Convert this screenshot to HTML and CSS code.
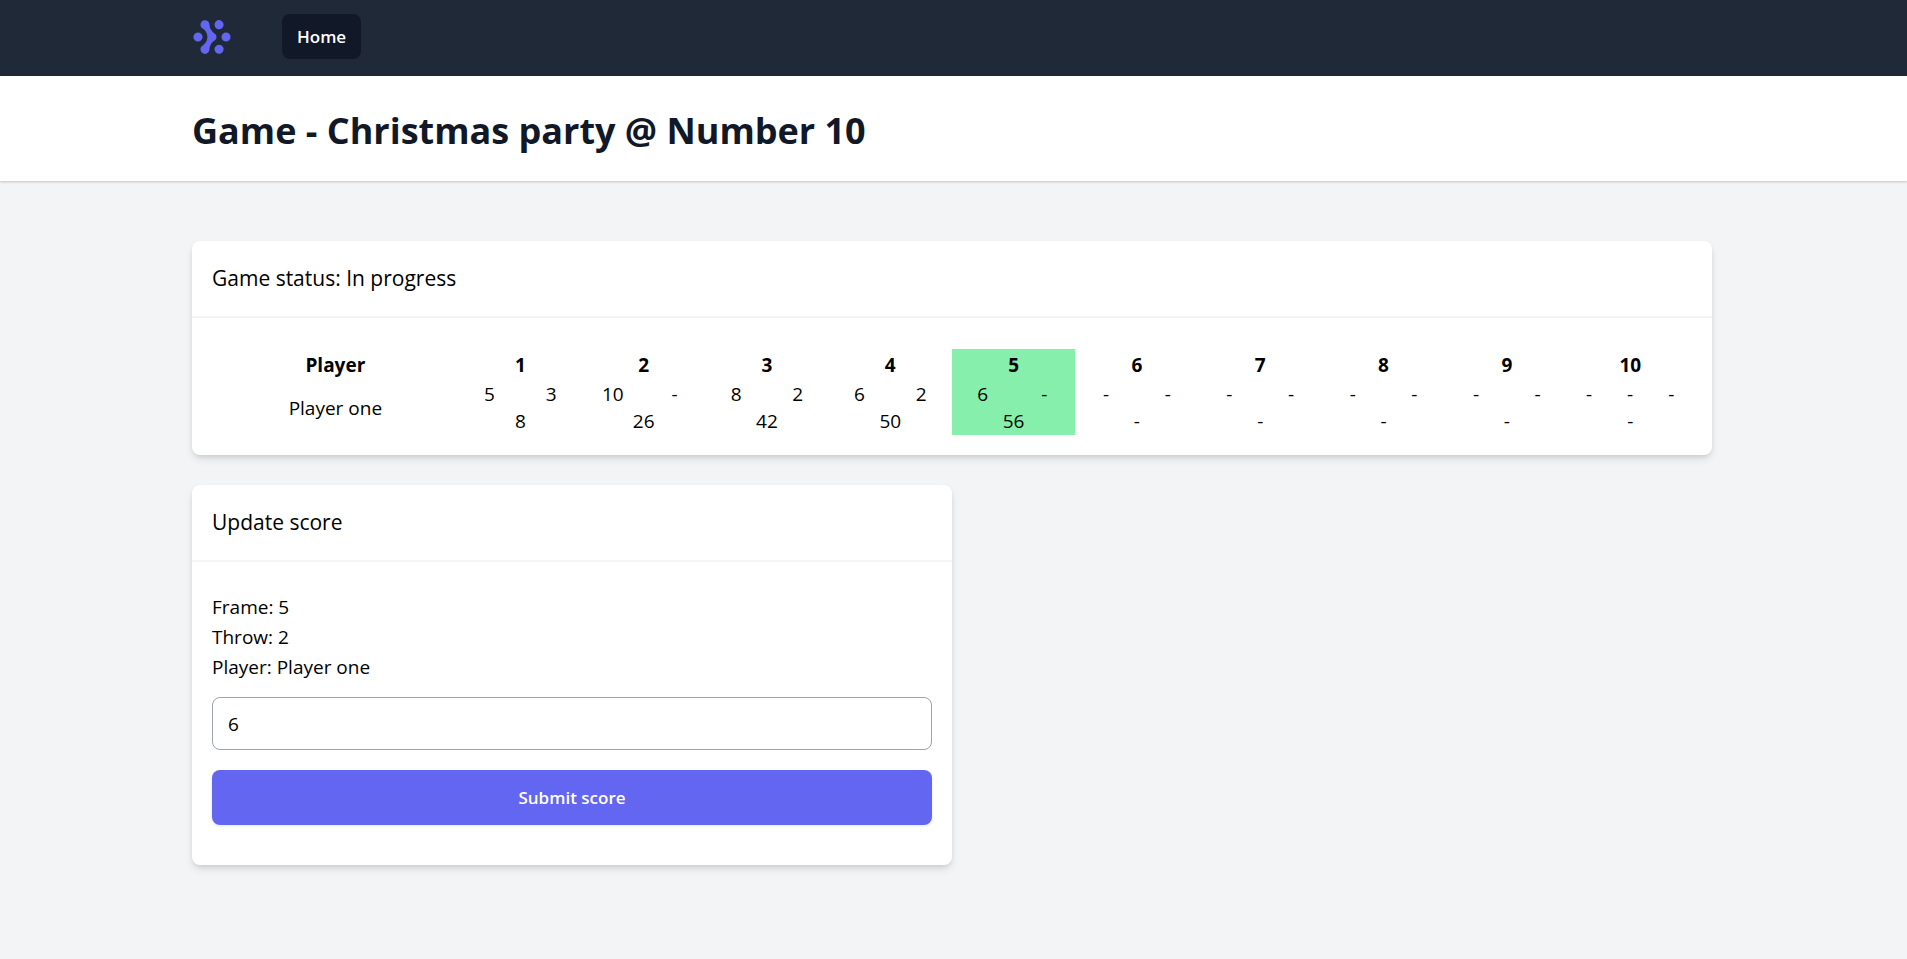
FILE: index.html
```html
<!DOCTYPE html>
<html lang="en">
<head>
<meta charset="utf-8">
<meta name="viewport" content="width=device-width, initial-scale=1">
<title>Game - Christmas party @ Number 10</title>
<link rel="stylesheet" href="styles.css">
</head>
<body>
<nav class="nav">
  <div class="container nav-inner">
    <svg class="logo" viewBox="0 0 35 32" role="img" aria-label="Logo"><path fill="#6366f1" d="M15.258 26.865a4.043 4.043 0 01-1.133 2.917A4.006 4.006 0 0111.253 31a3.992 3.992 0 01-2.872-1.218 4.028 4.028 0 01-1.133-2.917c.009-.698.2-1.382.557-1.981.356-.6.863-1.094 1.47-1.433-.024.109.09-.055 0 0l1.86-1.652a8.495 8.495 0 002.304-5.793c0-2.926-1.711-5.901-4.17-7.457.094.055-.036-.094 0 0A3.952 3.952 0 017.8 7.116a3.975 3.975 0 01-.557-1.98 4.042 4.042 0 011.133-2.918A4.006 4.006 0 0111.247 1a3.99 3.99 0 012.872 1.218 4.025 4.025 0 011.133 2.917 8.521 8.521 0 002.347 5.832l.817.8c.326.285.668.551 1.024.798.621.33 1.142.826 1.504 1.431a3.902 3.902 0 01-1.504 5.442c.033-.067-.063.036 0 0a8.968 8.968 0 00-3.024 3.183 9.016 9.016 0 00-1.158 4.244zM19.741 5.123c0 .796.235 1.575.676 2.237a4.01 4.01 0 001.798 1.482 3.99 3.99 0 004.366-.873 4.042 4.042 0 00.869-4.386 4.02 4.02 0 00-1.476-1.806 3.994 3.994 0 00-5.058.501 4.038 4.038 0 00-1.175 2.845zM23.748 22.84c-.792 0-1.567.236-2.226.678a4.021 4.021 0 00-1.476 1.806 4.042 4.042 0 00.869 4.387 3.99 3.99 0 004.366.873A4.01 4.01 0 0027.08 29.1a4.039 4.039 0 00-.5-5.082 4 4 0 00-2.832-1.18zM34 15.994c0-.796-.235-1.574-.675-2.236a4.01 4.01 0 00-1.798-1.483 3.99 3.99 0 00-4.367.873 4.042 4.042 0 00-.869 4.387 4.02 4.02 0 001.476 1.806 3.993 3.993 0 002.226.678 4.003 4.003 0 002.832-1.18A4.04 4.04 0 0034 15.993zM5.007 11.969c-.793 0-1.567.236-2.226.678a4.021 4.021 0 00-1.476 1.807 4.042 4.042 0 00.869 4.386 4.001 4.001 0 004.366.873 4.011 4.011 0 001.798-1.483 4.038 4.038 0 00-.5-5.08 4.004 4.004 0 00-2.831-1.181z"/></svg>
    <a class="nav-link" href="#" aria-current="page">Home</a>
  </div>
</nav>
<header class="page-header">
  <div class="container">
    <h1 class="page-title">Game - Christmas party @ Number 10</h1>
  </div>
</header>
<main class="container main">
  <section class="card">
    <h2 class="card-title">Game status: In progress</h2>
    <div class="card-table">
      <table class="scores">
        <colgroup>
          <col class="col-player">
          <col class="col-half" span="18">
          <col class="col-third" span="3">
        </colgroup>
        <thead>
          <tr>
            <th scope="col">Player</th>
            <th scope="col" colspan="2">1</th>
            <th scope="col" colspan="2">2</th>
            <th scope="col" colspan="2">3</th>
            <th scope="col" colspan="2">4</th>
            <th scope="col" colspan="2" class="current">5</th>
            <th scope="col" colspan="2">6</th>
            <th scope="col" colspan="2">7</th>
            <th scope="col" colspan="2">8</th>
            <th scope="col" colspan="2">9</th>
            <th scope="col" colspan="3">10</th>
          </tr>
        </thead>
        <tbody>
          <tr>
            <td rowspan="2">Player one</td>
            <td>5</td><td>3</td>
            <td>10</td><td>-</td>
            <td>8</td><td>2</td>
            <td>6</td><td>2</td>
            <td class="current">6</td><td class="current">-</td>
            <td>-</td><td>-</td>
            <td>-</td><td>-</td>
            <td>-</td><td>-</td>
            <td>-</td><td>-</td>
            <td>-</td><td>-</td><td>-</td>
          </tr>
          <tr>
            <td colspan="2">8</td>
            <td colspan="2">26</td>
            <td colspan="2">42</td>
            <td colspan="2">50</td>
            <td colspan="2" class="current">56</td>
            <td colspan="2">-</td>
            <td colspan="2">-</td>
            <td colspan="2">-</td>
            <td colspan="2">-</td>
            <td colspan="3">-</td>
          </tr>
        </tbody>
      </table>
    </div>
  </section>
  <section class="card card-half">
    <h2 class="card-title">Update score</h2>
    <form class="score-form">
      <div class="turn">
        <p>Frame: 5</p>
        <p>Throw: 2</p>
        <p>Player: Player one</p>
      </div>
      <input class="field" type="text" inputmode="numeric" name="score" value="6" aria-label="Score">
      <button class="submit" type="submit">Submit score</button>
    </form>
  </section>
</main>
</body>
</html>
```
FILE: styles.css
```css
* {
  box-sizing: border-box;
  margin: 0;
  padding: 0;
}

body {
  min-height: 100vh;
  background: #f3f4f6;
  color: #000;
  font-family: "Open Sans", "Noto Sans", sans-serif;
  font-size: 19px;
  line-height: 30px;
}

.container {
  max-width: 1520px;
  margin-left: max(0px, calc((100% - 1523px) / 2));
}

.nav {
  background: #1f2937;
}

.nav-inner {
  display: flex;
  align-items: center;
  gap: 50px;
  height: 76px;
  padding-bottom: 3px;
}

.logo {
  width: 40px;
  height: 36px;
}

.nav-link {
  padding: 10px 15px;
  border-radius: 8px;
  background: #111827;
  color: #fff;
  font-size: 17px;
  font-weight: 600;
  line-height: 25px;
  text-decoration: none;
}

.page-header {
  padding: 32px 0 28px;
  background: #fff;
  box-shadow: 0 1px 3px rgba(0, 0, 0, 0.1), 0 1px 2px rgba(0, 0, 0, 0.1);
}

.page-title {
  color: #111827;
  font-size: 36px;
  font-weight: 700;
  line-height: 45px;
}

.main {
  display: flex;
  flex-direction: column;
  gap: 30px;
  padding: 60px 0;
}

.card {
  border-radius: 8px;
  background: #fff;
  box-shadow: 0 5px 8px -1px rgba(0, 0, 0, 0.1), 0 2px 5px -1px rgba(0, 0, 0, 0.1);
}

.card-half {
  width: 50%;
}

.card-title {
  padding: 20px;
  border-bottom: 2px solid #f3f4f6;
  font-size: 21px;
  font-weight: 400;
  line-height: 35px;
}

.card-table {
  padding: 31px 20px 20px;
}

.scores {
  width: 100%;
  border-collapse: collapse;
  table-layout: fixed;
  text-align: center;
  line-height: 27px;
}

.scores th {
  font-weight: 700;
  line-height: 32px;
}

.col-player {
  width: calc(100% / 6);
}

.col-half {
  width: calc(100% / 24);
}

.col-third {
  width: calc(100% / 36);
}

.current {
  background: #86efac;
}

.score-form {
  display: flex;
  flex-direction: column;
  padding: 30px 20px 40px;
}

.turn {
  margin-bottom: 15px;
}

.field {
  width: 100%;
  height: 53px;
  margin-bottom: 20px;
  padding: 10px 15px;
  border: 1px solid #9ca3af;
  border-radius: 8px;
  background: #fff;
  color: #000;
  font: inherit;
}

.submit {
  padding: 15px;
  border: 0;
  border-radius: 8px;
  background: #6366f1;
  box-shadow: 0 1px 3px rgba(0, 0, 0, 0.1);
  color: #fff;
  font: inherit;
  font-size: 17px;
  font-weight: 600;
  line-height: 25px;
}
```
